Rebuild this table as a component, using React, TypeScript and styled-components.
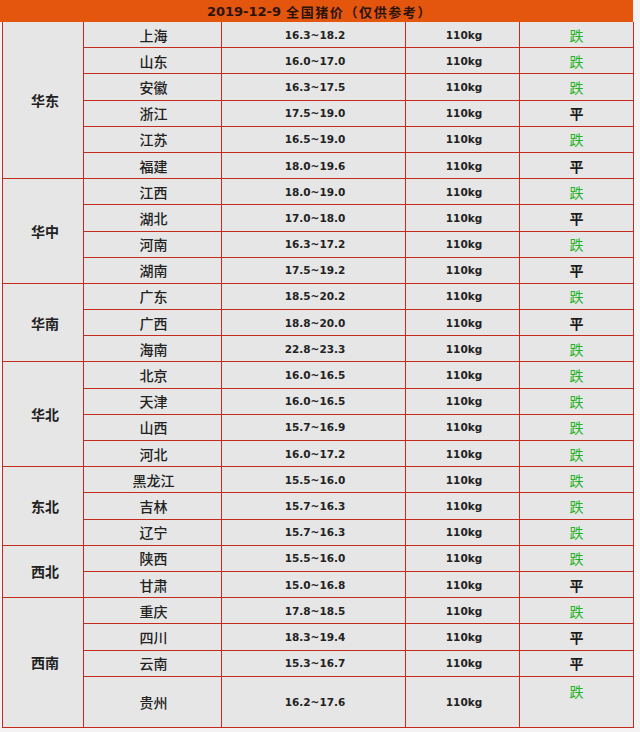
import React from "react";
import styled, { createGlobalStyle } from "styled-components";

const GlobalStyle = createGlobalStyle`
  html, body { margin: 0; padding: 0; background: #f4f2f2; }
  body { font-family: "DejaVu Sans", "Noto Sans CJK SC", sans-serif; }
`;

type Row = { name: string; price: string; trend: "跌" | "平" };
type Region = { region: string; rows: Row[] };

const data: Region[] = [
  { region: "华东", rows: [
    { name: "上海", price: "16.3~18.2", trend: "跌" },
    { name: "山东", price: "16.0~17.0", trend: "跌" },
    { name: "安徽", price: "16.3~17.5", trend: "跌" },
    { name: "浙江", price: "17.5~19.0", trend: "平" },
    { name: "江苏", price: "16.5~19.0", trend: "跌" },
    { name: "福建", price: "18.0~19.6", trend: "平" },
  ]},
  { region: "华中", rows: [
    { name: "江西", price: "18.0~19.0", trend: "跌" },
    { name: "湖北", price: "17.0~18.0", trend: "平" },
    { name: "河南", price: "16.3~17.2", trend: "跌" },
    { name: "湖南", price: "17.5~19.2", trend: "平" },
  ]},
  { region: "华南", rows: [
    { name: "广东", price: "18.5~20.2", trend: "跌" },
    { name: "广西", price: "18.8~20.0", trend: "平" },
    { name: "海南", price: "22.8~23.3", trend: "跌" },
  ]},
  { region: "华北", rows: [
    { name: "北京", price: "16.0~16.5", trend: "跌" },
    { name: "天津", price: "16.0~16.5", trend: "跌" },
    { name: "山西", price: "15.7~16.9", trend: "跌" },
    { name: "河北", price: "16.0~17.2", trend: "跌" },
  ]},
  { region: "东北", rows: [
    { name: "黑龙江", price: "15.5~16.0", trend: "跌" },
    { name: "吉林", price: "15.7~16.3", trend: "跌" },
    { name: "辽宁", price: "15.7~16.3", trend: "跌" },
  ]},
  { region: "西北", rows: [
    { name: "陕西", price: "15.5~16.0", trend: "跌" },
    { name: "甘肃", price: "15.0~16.8", trend: "平" },
  ]},
  { region: "西南", rows: [
    { name: "重庆", price: "17.8~18.5", trend: "跌" },
    { name: "四川", price: "18.3~19.4", trend: "平" },
    { name: "云南", price: "15.3~16.7", trend: "平" },
    { name: "贵州", price: "16.2~17.6", trend: "跌" },
  ]},
];

const Page = styled.div`
  width: 634px;
`;

const Header = styled.div`
  height: 22px;
  width: 633px;
  background: #e4560e;
  color: #2a1408;
  font-size: 13px;
  font-weight: 700;
  display: flex;
  align-items: center;
  justify-content: center;
  box-sizing: border-box;
  padding-left: 6px;
`;

const HeaderDate = styled.span`
  font-family: "DejaVu Sans", sans-serif;
  margin-right: 5px;
`;

const HeaderTitle = styled.span`
  font-family: "Noto Sans CJK SC", sans-serif;
  letter-spacing: 1.6px;
`;

const Grid = styled.div`
  margin-left: 2px;
  width: 632px;
  box-sizing: border-box;
  display: grid;
  grid-template-columns: 80px 137px 183px 113px 113px;
  grid-template-rows: repeat(25, 25.2px) 50px;
  gap: 1px;
  background: #c62a1c;
  border: 1px solid #c62a1c;
  border-top: none;
`;

const Cell = styled.div<{ $span?: number; $top?: boolean }>`
  background: #e6e6e6;
  display: flex;
  align-items: ${(p) => (p.$top ? "flex-start" : "center")};
  justify-content: center;
  color: #222;
  ${(p) => (p.$span ? `grid-row: span ${p.$span}; grid-column: 1;` : "")}
  ${(p) => (p.$top ? "padding-top: 4px;" : "")}
`;

const RegionCell = styled(Cell)`
  font-family: "Noto Sans CJK SC", sans-serif;
  font-size: 14px;
  font-weight: 700;
  padding-left: 4px;
`;

const NameCell = styled(Cell)`
  font-family: "Noto Sans CJK SC", sans-serif;
  font-size: 14px;
  font-weight: 500;
  padding-left: 2px;
`;

const NumCell = styled(Cell)`
  font-family: "DejaVu Sans", sans-serif;
  font-size: 10.5px;
  font-weight: 700;
  padding-left: 3px;
`;

const TrendCell = styled(Cell)<{ $down: boolean }>`
  font-family: "Noto Sans CJK SC", sans-serif;
  font-size: 14px;
  font-weight: ${(p) => (p.$down ? 400 : 700)};
  color: ${(p) => (p.$down ? "#22b224" : "#1a1a1a")};
`;

export default function App() {
  return (
    <Page>
      <GlobalStyle />
      <Header>
        <HeaderDate>2019-12-9</HeaderDate>
        <HeaderTitle>全国猪价（仅供参考）</HeaderTitle>
      </Header>
      <Grid>
        {data.map((g) => (
          <React.Fragment key={g.region}>
            <RegionCell $span={g.rows.length}>{g.region}</RegionCell>
            {g.rows.map((r) => {
              const last = r.name === "贵州";
              return (
                <React.Fragment key={r.name}>
                  <NameCell>{r.name}</NameCell>
                  <NumCell>{r.price}</NumCell>
                  <NumCell>110kg</NumCell>
                  <TrendCell $down={r.trend === "跌"} $top={last}>
                    {r.trend}
                  </TrendCell>
                </React.Fragment>
              );
            })}
          </React.Fragment>
        ))}
      </Grid>
    </Page>
  );
}
